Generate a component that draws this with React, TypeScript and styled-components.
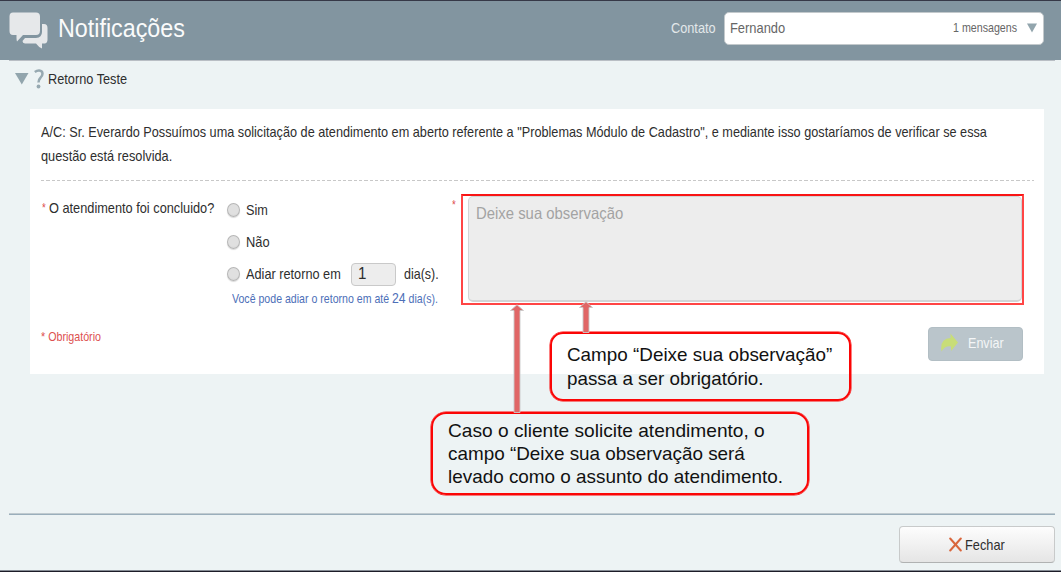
import React, { useLayoutEffect, useRef, useState } from "react";
import styled, { createGlobalStyle } from "styled-components";

const GlobalStyle = createGlobalStyle`
  * { box-sizing: border-box; }
  body {
    margin: 0;
    font-family: "Liberation Sans", Arial, sans-serif;
    font-size: 15px;
    color: #2e2e2e;
    background: #edf3f4;
  }
`;

/* Condensed text: the natural glyphs are narrowed to the given measure. */
const Measure = styled.span<{ $width: number; $line: number; $size: number; $color?: string }>`
  display: block;
  flex: none;
  width: ${(p) => p.$width}px;
  height: ${(p) => p.$line}px;
  line-height: ${(p) => p.$line}px;
  font-size: ${(p) => p.$size}px;
  color: ${(p) => p.$color ?? "inherit"};
  white-space: nowrap;
`;
const Glyphs = styled.span`
  display: inline-block;
  vertical-align: top;
  transform-origin: 0 0;
`;

type CondensedProps = {
  width: number;
  line?: number;
  size?: number;
  color?: string;
  className?: string;
  children: React.ReactNode;
};

function Condensed({ width, line = 20, size = 15, color, className, children }: CondensedProps) {
  const ref = useRef<HTMLSpanElement>(null);
  const [scale, setScale] = useState(1);
  useLayoutEffect(() => {
    if (ref.current) setScale(width / ref.current.offsetWidth);
  }, [width]);
  return (
    <Measure className={className} $width={width} $line={line} $size={size} $color={color}>
      <Glyphs ref={ref} style={{ transform: `scaleX(${scale})` }}>
        {children}
      </Glyphs>
    </Measure>
  );
}

const Page = styled.div`
  position: relative;
  display: flex;
  flex-direction: column;
  width: 1061px;
  height: 572px;
  overflow: hidden;
  background: #edf3f4;
  border-bottom: 1px solid #1c1c28;
  box-shadow: inset 0 -1px 0 #858b94;
`;

const Header = styled.header`
  display: flex;
  align-items: flex-start;
  height: 60px;
  flex: none;
  padding: 0 17px 0 9px;
  background: #8295a0;
  border-top: 1px solid #363847;
`;
const ChatIcon = styled.svg`
  flex: none;
  margin-top: 11px;
`;
const Title = styled(Condensed)`
  margin: 12px auto 0 9px;
`;
const ContactLabel = styled(Condensed)`
  margin: 17px 8px 0 0;
`;
const Select = styled.div`
  display: flex;
  align-items: center;
  justify-content: space-between;
  width: 320px;
  height: 33px;
  margin-top: 11px;
  padding: 0 6px 1px 5px;
  background: #fff;
  border: 1px solid #c3c9cc;
  border-radius: 5px;
`;
const SelectMeta = styled.div`
  display: flex;
  align-items: center;
  gap: 10px;
`;
const Rule = styled.div`
  height: 1px;
  flex: none;
  margin: 0 6px 0 9px;
  background: #b9bec4;
`;

const Topic = styled.div`
  display: flex;
  align-items: center;
  flex: none;
  height: 48px;
  padding: 0 0 13px 15px;
`;
const QuestionMark = styled.svg`
  margin: 1px 4px 0 5px;
`;

const Panel = styled.main`
  flex: none;
  width: 1014px;
  height: 265px;
  margin-left: 30px;
  padding: 11px 10px 0 11px;
  background: #fff;
`;
const Dashes = styled.div`
  height: 1px;
  margin-top: 12px;
  background: repeating-linear-gradient(90deg, #c8c8c8 0 3.3px, transparent 3.3px 5.3px);
`;
const Form = styled.div`
  display: flex;
  align-items: flex-start;
  height: 124px;
  margin-top: 13px;
`;
const Question = styled.div`
  display: flex;
  width: 186px;
  flex: none;
  margin-top: 4px;
  padding-left: 1px;
`;
const QuestionText = styled(Condensed)`
  margin-left: 3px;
`;
const Options = styled.div`
  width: 225px;
  flex: none;
`;
const Option = styled.label`
  display: flex;
  align-items: center;
  height: 32px;
`;
const Radio = styled.span`
  width: 13px;
  height: 14px;
  flex: none;
  margin-right: 6px;
  border: 1px solid #b6b6b6;
  border-radius: 50%;
  background: radial-gradient(circle at 50% 40%, #e0e0e0 55%, #d2d2d2);
  box-shadow: 0 1px 1px rgba(0, 0, 0, 0.15);
`;
const Days = styled.span`
  display: flex;
  width: 45px;
  height: 23px;
  margin: 0 8px 0 10px;
  padding-left: 6px;
  align-items: center;
  background: #ededed;
  border: 1px solid #c9c9c9;
  border-radius: 4px;
`;
const Hint = styled(Condensed)`
  margin: -2px 0 0 5px;
`;
const Larger = styled.span`
  font-size: 15px;
`;
const Star = styled(Condensed)`
  margin-top: 1px;
`;
const Highlight = styled.div`
  width: 563px;
  height: 111px;
  margin-left: auto;
  margin-right: 10px;
  border: 2px solid #ff4545;
  border-top-color: #f91414;
  padding: 0 0 1px 5px;
`;
const TextArea = styled.div`
  height: 106px;
  padding: 6px 7px;
  background: #ededed;
  border: 1px solid #d2d4d5;
  border-bottom-width: 2px;
  border-radius: 5px;
`;
const Actions = styled.div`
  display: flex;
  justify-content: space-between;
  padding: 9px 11px 0 0;
`;
const SendButton = styled.button`
  display: flex;
  align-items: center;
  width: 95px;
  height: 34px;
  padding: 0 0 2px 11px;
  gap: 9px;
  border: 1px solid #b2bec4;
  border-radius: 4px;
  background: #bac5cb;
  font-family: inherit;
  text-align: left;
`;

const Footer = styled.footer`
  display: flex;
  justify-content: flex-end;
  margin: auto 6px 0 9px;
  height: 58px;
  padding-top: 12px;
  border-top: 1px solid #c0cacf;
  box-shadow: inset 0 1px 0 #9aaebb;
`;
const CloseButton = styled.button`
  display: flex;
  align-items: center;
  width: 156px;
  height: 37px;
  padding: 0 0 0 49px;
  gap: 3px;
  border: 1px solid #c8caca;
  border-bottom-color: #b0b2b2;
  border-radius: 4px;
  background: linear-gradient(#fdfdfd, #e5e5e5);
  color: #2e2e2e;
  font-family: inherit;
  text-align: left;
`;

/* Annotations lie over the page. */
const Callout = styled.aside<{ $x: number; $y: number; $w: number; $h: number; $r: number; $pad: string }>`
  position: absolute;
  left: ${(p) => p.$x}px;
  top: ${(p) => p.$y}px;
  width: ${(p) => p.$w}px;
  height: ${(p) => p.$h}px;
  padding: ${(p) => p.$pad};
  border: 2px solid #fb0505;
  box-shadow: 0 0 0 0.5px #fb0505;
  border-radius: ${(p) => p.$r}px;
  color: #111;
`;
const Arrow = styled.svg<{ $x: number; $y: number }>`
  position: absolute;
  left: ${(p) => p.$x}px;
  top: ${(p) => p.$y}px;
`;

function UpArrow({ x, y, height }: { x: number; y: number; height: number }) {
  return (
    <Arrow $x={x} $y={y} width="16" height={height} viewBox={`0 0 16 ${height}`}>
      <path
        d={`M8 .8 14.5 6.5H11V${height - 0.5}H5V6.5H1.5Z`}
        fill="#e06666"
        stroke="#c9c9c9"
        strokeWidth="0.9"
      />
    </Arrow>
  );
}

export default function App() {
  return (
    <>
      <GlobalStyle />
      <Page>
        <Header>
          <ChatIcon width="40" height="38" viewBox="0 0 40 38" fill="#e6e8ea">
            <path d="M4 .5H27Q31 .5 31 4.500V18.500Q31 23 27 23H14L8 29.500Q7.400 28 7.500 23H4Q.5 23 .5 19V4.500Q.5.5 4 .5Z" />
            <path d="M33 12H35Q38.500 12 38.500 16V27.500Q38.500 31 36 31.500H33V36.500Q29.500 35 27 31.500H16Q13.500 31 13.500 29L16 26H27Q33 25.500 33 20Z" />
          </ChatIcon>
          <Title width={127} line={31} size={25.5} color="#fafbfb">Notificações</Title>
          <ContactLabel width={45} color="#e3e8ea">Contato</ContactLabel>
          <Select>
            <Condensed width={55} color="#666">Fernando</Condensed>
            <SelectMeta>
              <Condensed width={64} size={13} color="#666">1 mensagens</Condensed>
              <svg width="10" height="10" viewBox="0 0 10 10"><path d="M0 .5H10L5 9.500Z" fill="#92a5ad" /></svg>
            </SelectMeta>
          </Select>
        </Header>
        <Rule />
        <Topic>
          <svg width="14" height="12" viewBox="0 0 14 12"><path d="M0 0H13.500L6.800 11.500Z" fill="#92a5ad" /></svg>
          <QuestionMark width="10" height="20" viewBox="0 0 10 20">
            <path d="M.8 3Q3 1.400 5.200 1.500Q8.400 1.700 8.500 4.700Q8.500 6.800 6.500 8.700Q4.500 10.500 4.500 13.500" fill="none" stroke="#97a9b1" strokeWidth="2.500" />
            <circle cx="4.500" cy="17.500" r="1.900" fill="#97a9b1" />
          </QuestionMark>
          <Condensed width={79}>Retorno Teste</Condensed>
        </Topic>
        <Panel>
          <Condensed width={946} line={24}>
            A/C: Sr. Everardo Possuímos uma solicitação de atendimento em aberto referente a "Problemas Módulo de Cadastro", e mediante isso gostaríamos de verificar se essa
          </Condensed>
          <Condensed width={131} line={24}>questão está resolvida.</Condensed>
          <Dashes />
          <Form>
            <Question>
              <Condensed width={4} size={12} color="#dd4b4b">*</Condensed>
              <QuestionText width={165}>O atendimento foi concluido?</QuestionText>
            </Question>
            <Options>
              <Option><Radio /><Condensed width={22}>Sim</Condensed></Option>
              <Option><Radio /><Condensed width={24}>Não</Condensed></Option>
              <Option>
                <Radio />
                <Condensed width={95}>Adiar retorno em</Condensed>
                <Days><Condensed width={8} size={17}>1</Condensed></Days>
                <Condensed width={35}>dia(s).</Condensed>
              </Option>
              <Hint width={206} size={13} line={20} color="#4d6fb8">
                Você pode adiar o retorno em até <Larger>24</Larger> dia(s).
              </Hint>
            </Options>
            <Star width={4} size={12} color="#dd4b4b">*</Star>
            <Highlight>
              <TextArea>
                <Condensed width={147} size={16.5} color="#a3a3a3">Deixe sua observação</Condensed>
              </TextArea>
            </Highlight>
          </Form>
          <Actions>
            <Condensed width={60} size={13} color="#dd5050">* Obrigatório</Condensed>
            <SendButton>
              <svg width="19" height="20" viewBox="0 0 19 20">
                <path d="M10.500 .5 18 9.500 11 18V13.500Q5 12.500 1.500 18.500Q-.5 5.500 10.500 5Z" fill="#c8dd78" />
              </svg>
              <Condensed width={36} color="#f4f6f7">Enviar</Condensed>
            </SendButton>
          </Actions>
        </Panel>
        <Footer>
          <CloseButton>
            <svg width="13" height="15" viewBox="0 0 13 15">
              <path d="M1.200 1.500 11.800 13.500M11.800 1.500 1.200 13.500" fill="none" stroke="#d9663c" strokeWidth="2" strokeLinecap="round" />
            </svg>
            <Condensed width={40}>Fechar</Condensed>
          </CloseButton>
        </Footer>
        <Callout $x={550} $y={332} $w={301} $h={69} $r={13} $pad="9px 0 0 15px">
          <Condensed width={265} line={24} size={19}>Campo “Deixe sua observação”</Condensed>
          <Condensed width={197} line={24} size={19}>passa a ser obrigatório.</Condensed>
        </Callout>
        <Callout $x={431} $y={412} $w={378} $h={83} $r={15} $pad="5px 0 0 15px">
          <Condensed width={317} line={23} size={19}>Caso o cliente solicite atendimento, o</Condensed>
          <Condensed width={297} line={23} size={19}>campo “Deixe sua observação será</Condensed>
          <Condensed width={335} line={23} size={19}>levado como o assunto do atendimento.</Condensed>
        </Callout>
        <UpArrow x={509} y={304} height={109} />
        <UpArrow x={578} y={301} height={32} />
      </Page>
    </>
  );
}
